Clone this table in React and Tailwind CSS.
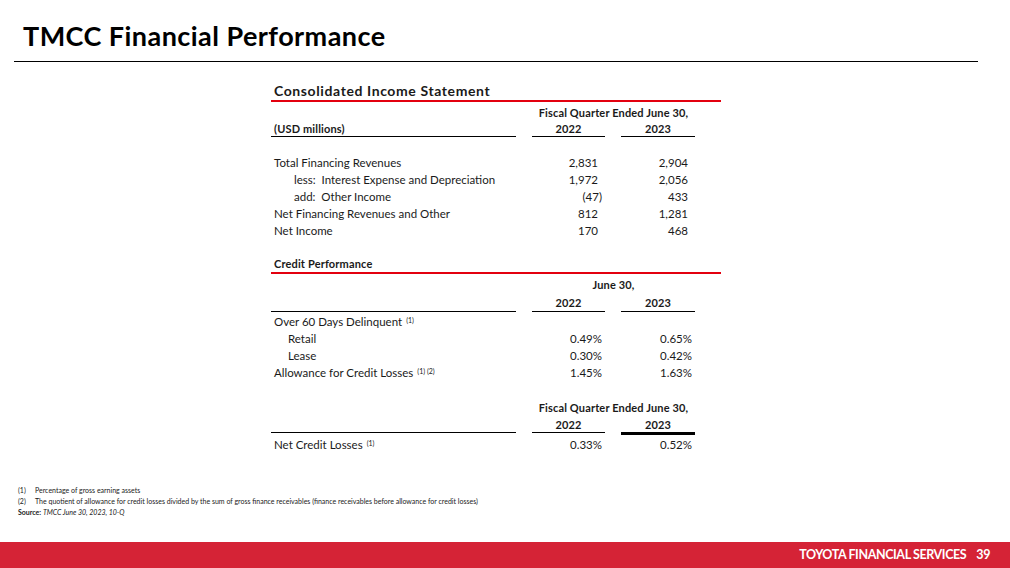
import React from 'react'

const font = { fontFamily: 'Lato, "Open Sans", sans-serif' }

function Sup({ children }) {
  return <sup className="text-[7px] relative -top-[3px] ml-[4px]">{children}</sup>
}

// one data row: label + two right-aligned values
function Row({ label, a, b, indent = 'pl-[3px]', aPad = 'pr-[7px]', bPad = 'pr-[7px]' }) {
  return (
    <div className="flex h-[17px] pt-[2px] items-center text-[11.5px] leading-[15px] text-[#1a1a1a]">
      <div className={`w-[245px] whitespace-pre ${indent}`}>{label}</div>
      <div className={`ml-[16px] w-[73px] text-right ${aPad}`}>{a}</div>
      <div className={`ml-[16px] w-[74px] text-right ${bPad}`}>{b}</div>
    </div>
  )
}

function YearHeader({ label, h = 'h-[17px]', h2 = 'h-[17px]', thick = false }) {
  return (
    <div className="flex items-start text-[11px] font-bold tracking-[0.15px] text-[#1a1a1a]">
      <div className={`w-[245px] pl-[3px] pt-[2px] border-b border-black ${h} flex items-center`}>{label}</div>
      <div className={`ml-[16px] w-[73px] pt-[2px] border-b border-black ${h} flex items-center justify-center`}>2022</div>
      <div
        className={`ml-[16px] w-[74px] pt-[2px] border-black ${thick ? h2 : h} flex items-center justify-center ${
          thick ? 'border-b-[3px]' : 'border-b'
        }`}
      >
        2023
      </div>
    </div>
  )
}

function SpanHeader({ children, className = '' }) {
  return (
    <div className={`flex h-[17px] items-center text-[11px] font-bold tracking-[0.15px] text-[#1a1a1a] ${className}`}>
      <div className="w-[245px]" />
      <div className="ml-[16px] w-[163px] text-center whitespace-nowrap">{children}</div>
    </div>
  )
}

export default function App() {
  return (
    <div className="w-[1010px] h-[568px] bg-white flex flex-col overflow-hidden" style={font}>
      {/* Title */}
      <div className="pt-[20px] pl-[23px]">
        <h1 className="text-[27px] leading-[31px] font-bold text-black tracking-[0.45px]">TMCC Financial Performance</h1>
      </div>
      <div className="mt-[10px] ml-[14px] w-[964px] border-t border-black" />

      {/* Tables */}
      <div className="ml-[271px] w-[450px]">
        <div className="mt-[18px] h-[20px] flex items-center pl-[3px] text-[14px] font-bold tracking-[0.6px] text-[#1a1a1a]">
          Consolidated Income Statement
        </div>
        <div className="border-t-2 border-[#e3000f]" />
        <SpanHeader className="h-[18px] pt-[4px]">Fiscal Quarter Ended June 30,</SpanHeader>
        <YearHeader label="(USD millions)" />

        <div className="mt-[16px]">
          <Row label="Total Financing Revenues" a="2,831" b="2,904" />
          <Row label={'less:  Interest Expense and Depreciation'} a="1,972" b="2,056" indent="pl-[23px]" />
          <Row label={'add:  Other Income'} a="(47)" b="433" indent="pl-[23px]" aPad="pr-[3px]" />
          <Row label="Net Financing Revenues and Other" a="812" b="1,281" />
          <Row label="Net Income" a="170" b="468" />
        </div>

        <div className="mt-[17px] h-[17px] pt-[2px] flex items-center pl-[3px] text-[11px] font-bold tracking-[0.15px] text-[#1a1a1a]">
          Credit Performance
        </div>
        <div className="border-t-2 border-[#e3000f]" />
        <SpanHeader className="mt-[2px] pt-[2px]">June 30,</SpanHeader>
        <YearHeader label="" h="h-[19px]" />

        <div>
          <Row label={<>Over 60 Days Delinquent<Sup>(1)</Sup></>} a="" b="" />
          <Row label="Retail" a="0.49%" b="0.65%" indent="pl-[17px]" aPad="pr-[3px]" bPad="pr-[3px]" />
          <Row label="Lease" a="0.30%" b="0.42%" indent="pl-[17px]" aPad="pr-[3px]" bPad="pr-[3px]" />
          <Row
            label={<>Allowance for Credit Losses<Sup>(1) (2)</Sup></>}
            a="1.45%"
            b="1.63%"
            aPad="pr-[3px]"
            bPad="pr-[3px]"
          />
        </div>

        <SpanHeader className="mt-[19px] pt-[2px]">Fiscal Quarter Ended June 30,</SpanHeader>
        <YearHeader label="" h="h-[17px]" h2="h-[19px]" thick />
        <Row
          label={<>Net Credit Losses<Sup>(1)</Sup></>}
          a="0.33%"
          b="0.52%"
          aPad="pr-[3px]"
          bPad="pr-[3px]"
        />
      </div>

      {/* Footnotes */}
      <div className="mt-auto pl-[18px] text-[7px] leading-[11px] text-[#1a1a1a]">
        <div className="flex">
          <span className="w-[17px]">(1)</span>
          <span>Percentage of gross earning assets</span>
        </div>
        <div className="flex">
          <span className="w-[17px]">(2)</span>
          <span>
            The quotient of allowance for credit losses divided by the sum of gross finance receivables (finance
            receivables before allowance for credit losses)
          </span>
        </div>
        <div>
          <span className="font-bold">Source: </span>
          <span className="italic">TMCC June 30, 2023, 10-Q</span>
        </div>
      </div>

      {/* Footer band */}
      <div className="mt-[24px] h-[26px] shrink-0 bg-[#d52336] flex items-center justify-end pr-[20px] text-white font-bold text-[12.5px] tracking-[-0.4px]">
        <span>TOYOTA FINANCIAL SERVICES</span>
        <span className="ml-[10px]">39</span>
      </div>
    </div>
  )
}
